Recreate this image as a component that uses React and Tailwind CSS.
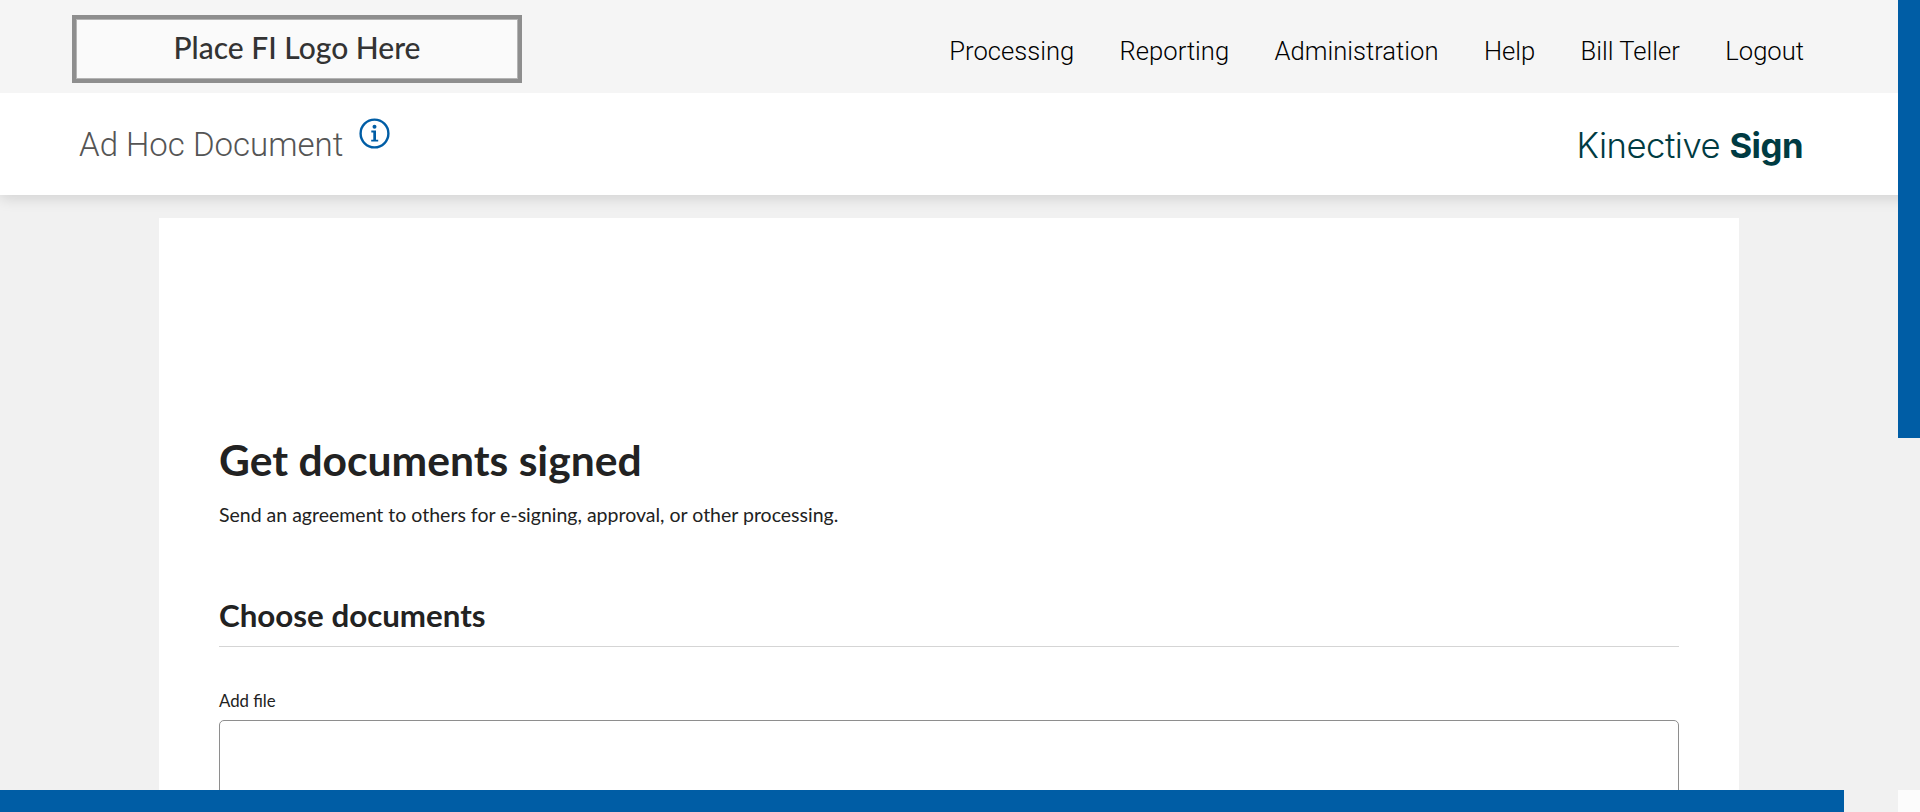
export default function App() {
  const nav = ["Processing", "Reporting", "Administration", "Help", "Bill Teller", "Logout"];
  return (
    <div className="relative h-screen overflow-hidden bg-[#f1f1f1] font-['Roboto',sans-serif]">
      <header className="relative z-10 shadow-[0_3px_14px_rgba(0,0,0,0.14)]">
        <div className="flex h-[93px] items-start justify-between bg-[#f5f5f5] pl-[72px] pr-[116px]">
          <div className="mt-[15px] flex h-[68px] w-[450px] items-center justify-center border-4 border-[#8e8e8e] bg-[#fafafa] outline outline-1 -outline-offset-[5px] outline-[#b4b4b4] pb-[4px] font-['Lato',sans-serif] text-[30px] font-medium text-[#333333]">
            Place FI Logo Here
          </div>
          <nav className="mt-[33px] flex gap-[45.4px] text-[25.6px] font-light leading-[36px] text-black">
            {nav.map((item) => (
              <span key={item}>{item}</span>
            ))}
          </nav>
        </div>
        <div className="flex h-[102px] items-start justify-between bg-white pl-[79px] pr-[117px]">
          <div className="flex items-start">
            <h1 className="mt-[28px] text-[33px] font-light leading-[48px] text-[#555555]">Ad Hoc Document</h1>
            <svg className="ml-[16px] mt-[25px]" width="31" height="31" viewBox="0 0 31 31" fill="none" aria-hidden="true">
              <circle cx="15.5" cy="15.5" r="13.9" stroke="#005da5" strokeWidth="2.4" />
              <circle cx="15.5" cy="8.8" r="2" fill="#005da5" />
              <path d="M12.3 12.6h4.7v9.2h2.2v1.8h-7v-1.8h2.1v-7.4h-2z" fill="#005da5" />
            </svg>
          </div>
          <div className="mt-[28px] text-[34.7px] leading-[48px] font-light text-[#003b42] font-['Inter',sans-serif] tracking-[-0.5px]">
            Kinective <span className="font-bold">Sign</span>
          </div>
        </div>
      </header>

      <main className="ml-[159px] mt-[23px] h-[700px] w-[1580px] bg-white px-[60px] pt-[216px] font-['Lato',sans-serif]">
        <h2 className="text-[42.6px] font-bold leading-[52px] text-[#222222]">Get documents signed</h2>
        <p className="mt-[15px] text-[19.5px] leading-[28px] text-[#222222]">
          Send an agreement to others for e-signing, approval, or other processing.
        </p>
        <h3 className="mt-[66px] border-b border-[#d5d5d5] pb-[11px] text-[31.3px] font-bold leading-[40px] text-[#222222]">
          Choose documents
        </h3>
        <label className="mt-[44px] block text-[16.8px] leading-[20px] text-[#222222]">Add file</label>
        <div className="mt-[9px] h-[200px] rounded-[5px] border border-[#8e8e8e] bg-white" />
      </main>

      <div className="absolute right-0 top-0 z-20 h-[438px] w-[22px] bg-[#005da5]" />
      <div className="absolute bottom-0 left-0 z-20 h-[22px] w-[1844px] bg-[#005da5]" />
      <div className="absolute bottom-0 right-0 z-20 h-[22px] w-[22px] bg-[#fcfcfc]" />
    </div>
  );
}
